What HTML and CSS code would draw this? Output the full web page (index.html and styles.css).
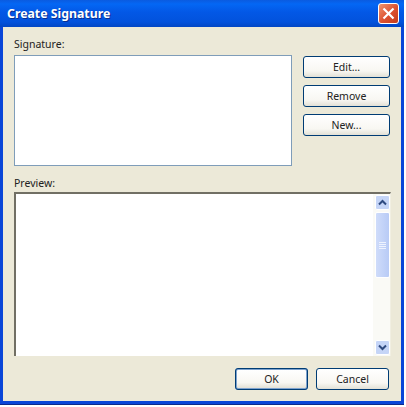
FILE: index.html
```html
<!DOCTYPE html>
<html lang="en">
<head>
  <meta charset="UTF-8">
  <title>Create Signature</title>
  <link rel="stylesheet" href="styles.css">
</head>
<body>
  <div class="window">
    <div class="titlebar">
      <span class="title">Create Signature</span>
      <div class="close">
        <svg width="13" height="13" viewBox="0 0 13 13"><path d="M1.5 1.5 L11.5 11.5 M11.5 1.5 L1.5 11.5" stroke="#fff" stroke-width="2.2" fill="none"/></svg>
      </div>
    </div>
    <div class="content">
      <div class="label sig-label">Signature:</div>
      <div class="sig-row">
        <div class="sig-box"></div>
        <div class="side-buttons">
          <button class="btn">Edit...</button>
          <button class="btn">Remove</button>
          <button class="btn">New...</button>
        </div>
      </div>
      <div class="label preview-label">Preview:</div>
      <div class="preview">
        <div class="preview-text"></div>
        <div class="scrollbar">
          <div class="arrow">
            <svg width="9" height="7" viewBox="0 0 9 7"><path d="M1 5.5 L4.5 2 L8 5.5" stroke="#2f4b80" stroke-width="2" fill="none"/></svg>
          </div>
          <div class="thumb">
            <div class="grip"></div>
            <div class="grip"></div>
            <div class="grip"></div>
            <div class="grip"></div>
          </div>
          <div class="track"></div>
          <div class="arrow">
            <svg width="9" height="7" viewBox="0 0 9 7"><path d="M1 1.5 L4.5 5 L8 1.5" stroke="#2f4b80" stroke-width="2" fill="none"/></svg>
          </div>
        </div>
      </div>
      <div class="footer">
        <button class="btn btn-ok">OK</button>
        <button class="btn btn-cancel">Cancel</button>
      </div>
    </div>
  </div>
</body>
</html>
```

FILE: styles.css
```css
body {
  margin: 0;
  background: #fff;
  font-family: "Noto Sans", Tahoma, sans-serif;
  font-size: 10.5px;
  color: #222;
}
.window {
  width: 404px;
  height: 404px;
  background: #0a46d8;
  display: flex;
  flex-direction: column;
  border-bottom: 1px solid #0a2a8c;
}
.titlebar {
  height: 27px;
  flex: none;
  display: flex;
  align-items: center;
  justify-content: space-between;
  padding: 0 5px 0 7px;
  background: linear-gradient(to bottom, #0a5be0 0, #0467f4 4px, #0358e6 12px, #0252dc 22px, #0246c4 27px);
}
.title {
  color: #fff;
  font-size: 12.3px;
  font-weight: bold;
  text-shadow: 1px 1px 0 #0a2f90;
}
.close {
  width: 21px;
  height: 21px;
  box-sizing: border-box;
  border: 1px solid #fff;
  border-radius: 3px;
  background: linear-gradient(135deg, #f0956e, #dc5030 55%, #c43c1c);
  display: flex;
  align-items: center;
  justify-content: center;
}
.content {
  flex: 1;
  margin: 0 3px 3px 3px;
  background: #ece9d8;
  padding: 10px 11px 0 11px;
  display: flex;
  flex-direction: column;
  min-height: 0;
}
.label {
  height: 15px;
  line-height: 15px;
}
.sig-label {
  margin-bottom: 3px;
}
.sig-row {
  display: flex;
  justify-content: space-between;
}
.sig-box {
  width: 278px;
  height: 111px;
  box-sizing: border-box;
  background: #fff;
  border: 1px solid #7f9db9;
}
.side-buttons {
  width: 87px;
  margin-top: 1px;
  display: flex;
  flex-direction: column;
  gap: 7px;
}
.btn {
  height: 22px;
  padding: 0;
  box-sizing: border-box;
  border: 1px solid #003c74;
  border-radius: 3px;
  background: linear-gradient(to bottom, #fff 0, #f8f7f2 70%, #e3e1d6 100%);
  font-family: "Noto Sans", Tahoma, sans-serif;
  font-size: 10.5px;
  color: #222;
}
.preview-label {
  margin-top: 10px;
  margin-bottom: 1px;
}
.preview {
  height: 164px;
  width: 377px;
  box-sizing: border-box;
  background: #fff;
  border-top: 2px solid #716f64;
  border-left: 2px solid #716f64;
  border-right: 1px solid #f1efe2;
  display: flex;
  justify-content: space-between;
}
.scrollbar {
  width: 17px;
  padding: 1px 0 1px 2px;
  box-sizing: border-box;
  background: #fafaf6;
  display: flex;
  flex-direction: column;
}
.arrow {
  height: 15px;
  flex: none;
  box-sizing: border-box;
  border: 1px solid #fff;
  border-radius: 2px;
  background: #c5d5f7;
  display: flex;
  align-items: center;
  justify-content: center;
}
.thumb {
  height: 66px;
  flex: none;
  margin-top: 2px;
  box-sizing: border-box;
  border: 1px solid #fff;
  border-radius: 2px;
  background: linear-gradient(to right, #cfdcfa, #b8cbf6);
  display: flex;
  flex-direction: column;
  align-items: center;
  justify-content: center;
  gap: 1px;
}
.grip {
  width: 7px;
  height: 1px;
  background: #eef3fe;
}
.track {
  flex: 1;
}
.footer {
  display: flex;
  gap: 8px;
  margin-top: 12px;
  padding-left: 221px;
}
.btn-ok {
  width: 73px;
  border: 2px solid #7da2ce;
  outline: 1px solid #003c74;
  outline-offset: -1px;
}
.btn-cancel {
  width: 73px;
}
```
